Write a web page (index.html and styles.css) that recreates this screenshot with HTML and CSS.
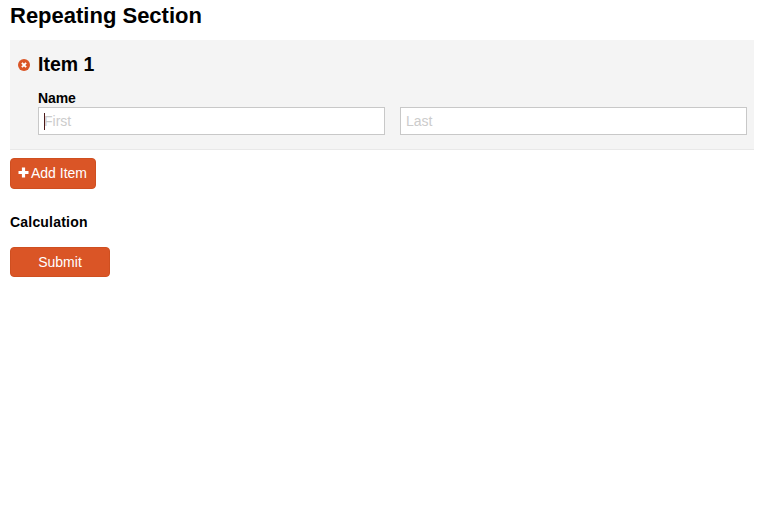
FILE: index.html
```html
<!DOCTYPE html>
<html lang="en">
<head>
<meta charset="utf-8">
<title>Repeating Section</title>
<link rel="stylesheet" href="styles.css">
</head>
<body>
<form class="form">
  <h2 class="section-title">Repeating Section</h2>
  <div class="repeater">
    <div class="item-head">
      <svg class="remove-icon" viewBox="0 0 12 12" width="12" height="12" aria-hidden="true">
        <circle cx="6" cy="6" r="6" fill="#da5526"/>
        <path d="M3.9 3.9l4.2 4.2M8.1 3.9l-4.2 4.2" stroke="#fff" stroke-width="1.9" fill="none"/>
      </svg>
      <h3 class="item-title">Item 1</h3>
    </div>
    <div class="item-body">
      <div class="field-label">Name</div>
      <div class="name-row">
        <div class="fake-input"><span class="caret"></span><span class="placeholder">First</span></div>
        <div class="fake-input"><span class="placeholder">Last</span></div>
      </div>
    </div>
  </div>
  <button type="button" class="btn btn-add">
    <svg class="plus-icon" viewBox="0 0 11 11" width="11" height="11" aria-hidden="true">
      <path d="M5.5 0.5v10M0.5 5.5h10" stroke="#fff" stroke-width="3.2" fill="none"/>
    </svg>Add Item</button>
  <div class="calc-label">Calculation</div>
  <button type="button" class="btn btn-submit">Submit</button>
</form>
</body>
</html>
```
FILE: styles.css
```css
* { box-sizing: border-box; }
html, body { margin: 0; padding: 0; background: #fff; }
body { font-family: "Liberation Sans", Arial, sans-serif; color: #000; }
.form { display: flex; flex-direction: column; align-items: flex-start; padding: 0 11px 0 10px; }
.section-title { margin: 4px 0 0; font-size: 22px; line-height: 24px; font-weight: 700; height: 36px; }
.repeater { width: 100%; height: 110px; background: #f4f4f4; border-bottom: 1px solid #e8e8e8; padding: 12px 7px 0 8px; }
.item-head { display: flex; align-items: center; height: 24px; }
.remove-icon { flex: none; margin-top: 2px; }
.item-title { margin: 0 0 0 8px; font-size: 19.5px; line-height: 24px; font-weight: 700; }
.item-body { padding: 14px 0 0 20px; }
.field-label { font-size: 14px; line-height: 17px; font-weight: 700; letter-spacing: -0.1px; }
.name-row { display: grid; grid-template-columns: 1fr 1fr; column-gap: 15px; }
.fake-input { position: relative; height: 28px; background: #fff; border: 1px solid #c8c8c8; padding: 0 5px; font-size: 14px; line-height: 26px; }
.placeholder { color: #cccccc; }
.caret { position: absolute; left: 5px; top: 5px; width: 1px; height: 17px; background: #4a1a1a; }
.btn { display: block; border: 1px solid #cf4f20; border-radius: 4px; background: #da5526; color: #fff; font-family: inherit; font-size: 14px; padding: 0; }
.btn-add { margin-top: 8px; width: 86px; height: 31px; display: flex; align-items: center; justify-content: center; padding-bottom: 2px; }
.plus-icon { margin-right: 2px; flex: none; margin-left: -1px; }
.calc-label { margin-top: 25px; font-size: 14px; line-height: 16px; font-weight: 700; letter-spacing: 0.2px; }
.btn-submit { margin-top: 17px; width: 100px; height: 30px; }
```
